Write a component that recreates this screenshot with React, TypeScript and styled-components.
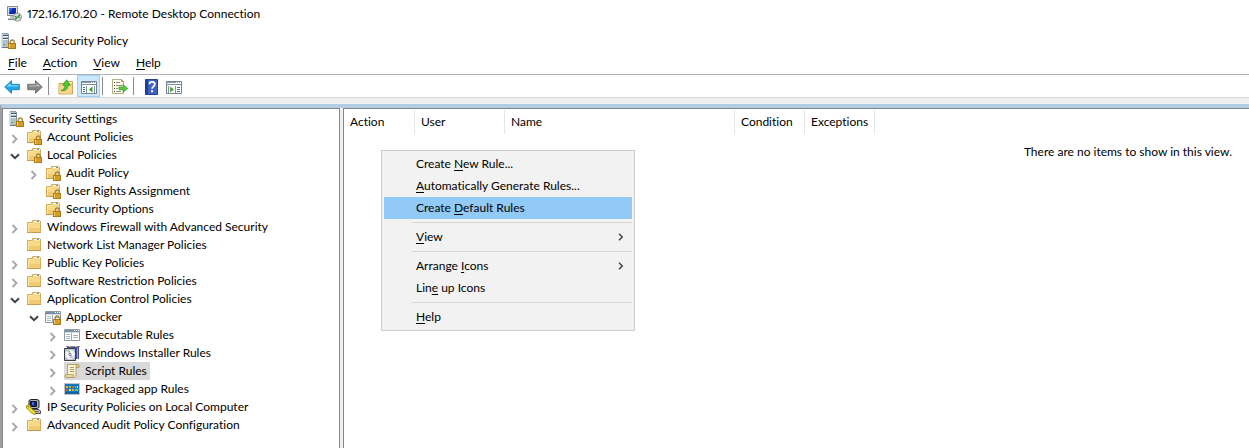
import React from "react";
import styled, { createGlobalStyle } from "styled-components";

const GlobalStyle = createGlobalStyle`
  *, *::before, *::after { box-sizing: border-box; }
  body {
    margin: 0;
    background: #ffffff;
    color: #000000;
    font-family: "Segoe UI", Lato, "Open Sans", sans-serif;
    font-size: 12px;
    line-height: 18px;
    font-variant-ligatures: none;
    font-variant-numeric: proportional-nums;
  }
  button {
    margin: 0;
    padding: 0;
    border: 0;
    background: none;
    color: inherit;
    font: inherit;
    font-variant-ligatures: none;
    text-align: left;
    white-space: nowrap;
  }
  h1, h2, ul, p { margin: 0; padding: 0; font-size: inherit; font-weight: inherit; list-style: none; }
  svg { display: block; flex: none; }
`;

/* ---------- layout ---------- */

const Window = styled.div`
  display: flex;
  flex-direction: column;
  min-height: 100vh;
`;

const RemoteTitle = styled.header`
  display: flex;
  align-items: center;
  gap: 5px;
  height: 28px;
  padding-left: 6px;
`;

const ConsoleTitle = styled.div`
  display: flex;
  align-items: center;
  gap: 5px;
  height: 26px;
`;

const MenuBar = styled.nav`
  display: flex;
  align-items: center;
  gap: 16px;
  height: 21px;
  padding: 0 8px 2px;
  border-bottom: 1px solid #b4b4b4;
`;

const MenuBarItem = styled.button`
  line-height: 18px;
`;

const Key = styled.u`
  text-underline-offset: 2px;
  text-decoration-skip-ink: none;
`;

const ToolBar = styled.div`
  display: flex;
  align-items: center;
  height: 23px;
  border-bottom: 1px solid #d9d9d9;
`;

const ToolButton = styled.button<{ $active?: boolean }>`
  display: flex;
  align-items: center;
  justify-content: center;
  width: 23px;
  height: 22px;
  padding-top: 2px;
  border: 1px solid ${(p) => (p.$active ? "#99d1ff" : "transparent")};
  background: ${(p) => (p.$active ? "#cce8ff" : "transparent")};
`;

const ToolDivider = styled.span`
  width: 1px;
  height: 18px;
  margin: 0 5px 0 2px;
  background: #8c8c8c;
`;

const Workspace = styled.div`
  display: flex;
  flex-direction: column;
  flex: 1;
  padding-top: 6px;
  background: #f0f0f0;
`;

const PaneFrame = styled.main`
  display: grid;
  grid-template-columns: 338px minmax(0, 1fr);
  column-gap: 3px;
  flex: 1;
  border-left: 2px solid #a0a0a0;
  border-top: 4px solid #b4cde6;
  background: #f0f0f0;
`;

const TreePane = styled.nav`
  padding: 1px 0 14px 5px;
  border: 1px solid #828790;
  border-bottom: 0;
  background: #ffffff;
`;

const ListPane = styled.section`
  position: relative;
  padding-top: 1px;
  border: 1px solid #828790;
  border-width: 1px 0 0 1px;
  background: #ffffff;
`;

/* ---------- tree ---------- */

const TreeRow = styled.div<{ $depth: number }>`
  display: flex;
  align-items: center;
  height: 18px;
  padding-left: ${(p) => (p.$depth === 0 ? 0 : p.$depth * 19 - 19)}px;
`;

const Twisty = styled.span`
  display: flex;
  align-items: center;
  justify-content: center;
  width: 13px;
  height: 18px;
  padding-top: 3px;
  margin-right: 5px;
`;

const TreeButton = styled.button<{ $selected?: boolean }>`
  display: flex;
  align-items: center;
  height: 18px;
  gap: 5px;
  padding-right: 3px;
  background: ${(p) => (p.$selected ? "#d9d9d9" : "none")};
`;

/* ---------- list ---------- */

const RuleTable = styled.table`
  table-layout: fixed;
  width: 100%;
  border-collapse: separate;
  border-spacing: 0;
`;

const ColumnHead = styled.th<{ $width?: number }>`
  width: ${(p) => (p.$width ? p.$width + "px" : "auto")};
  height: 24px;
  padding: 0 0 0 6px;
  border-right: ${(p) => (p.$width ? "1px solid #e5e5e5" : "0")};
  font-weight: 400;
  text-align: left;
  white-space: nowrap;
`;

const EmptyCell = styled.td`
  padding: 9px 17px 0 0;
  text-align: right;
`;

/* ---------- context menu ---------- */

const ContextMenu = styled.div`
  position: absolute;
  top: 41px;
  left: 37px;
  width: 254px;
  padding: 2px;
  border: 1px solid #cccccc;
  background: #f2f2f2;
`;

const ContextItem = styled.button<{ $active?: boolean }>`
  display: flex;
  align-items: center;
  justify-content: space-between;
  width: 100%;
  height: 22px;
  padding: 0 8px 0 32px;
  background: ${(p) => (p.$active ? "#91c9f7" : "none")};
`;

const ContextDivider = styled.hr`
  height: 1px;
  margin: 3px 0 3px 28px;
  border: 0;
  background: #d7d7d7;
`;

/* ---------- icons ---------- */

const Icon = ({ children }: { children: React.ReactNode }) => (
  <svg width="16" height="16" viewBox="0 0 16 16" aria-hidden="true">
    {children}
  </svg>
);

const Lock = () => (
  <g>
    <path d="M10.3 11V9.2a2 2.2 0 0 1 4 0V11" fill="none" stroke="#a98a3c" strokeWidth="1.4" />
    <rect x="8.5" y="10.5" width="7" height="5" fill="#e2ab33" stroke="#b07a14" />
    <path d="M9 12h6M9 14h6" stroke="#c18a1e" strokeWidth=".8" />
    <path d="M9.5 11v4" stroke="#f7d980" strokeWidth=".8" />
  </g>
);

const FolderShape = () => (
  <g>
    <path d="M1 3.5h5.5v-2h7l1 1V14H1z" fill="#f3d27c" />
    <path d="M1.5 14V3.5h5v-2h7.2l.8.8V14" fill="none" stroke="#d6ac58" />
    <path d="M8 2.5h6" stroke="#ffffff" />
    <path d="M11 2.5h2" stroke="#4a94d6" />
    <path d="M2 4.5h5l1-1h6" stroke="#fbe6a6" fill="none" />
    <path d="M2 5h12v9H2z" fill="#f8d98a" />
    <path d="M2 9h12v5H2z" fill="#f1ca74" />
    <path d="M2.5 5v8" stroke="#fce6a8" />
    <path d="M1 13.5h14" stroke="#c59c4c" />
  </g>
);

const FolderIcon = () => <Icon><FolderShape /></Icon>;
const LockedFolderIcon = () => <Icon><FolderShape /><Lock /></Icon>;

const PolicyIcon = () => (
  <Icon>
    <path d="M2.5.5h6v14h-7V1.5z" fill="#a9bac6" />
    <path d="M2 1h6v13H2z" fill="#b0c1cc" />
    <path d="M2 .5h6" stroke="#8fa0ad" />
    <path d="M8.5 1v13" stroke="#8090a0" />
    <path d="M2.500 1v13" stroke="#c9d6de" />
    <path d="M3 2.5h5M3 5.5h5" stroke="#455866" />
    <path d="M3 3.5h5M3 6.5h5" stroke="#eef4f8" />
    <path d="M3 11.5h2" stroke="#55a84e" />
    <path d="M2 14.5h7" stroke="#687986" />
    <Lock />
  </Icon>
);

const WindowShape = () => (
  <g>
    <path d="M.5 2.5h15v11H.5z" fill="#ffffff" stroke="#8d98a2" />
    <path d="M1 3h14v2H1z" fill="#7890a4" />
    <path d="M10 3.5h1M12 3.5h1M14 3.5h1" stroke="#ffffff" />
    <path d="M1 5.5h14" stroke="#d0dbe3" />
    <path d="M2 7.5h4M2 9.5h4M2 11.5h4" stroke="#a3b6c5" />
    <path d="M7.5 6v8" stroke="#9aa7b1" />
    <path d="M9 8.5h5M9 10.5h5" stroke="#a9b1b8" />
  </g>
);

const RulesIcon = () => <Icon><WindowShape /></Icon>;
const AppLockerIcon = () => <Icon><WindowShape /><Lock /></Icon>;

const RemoteIcon = () => (
  <Icon>
    <path d="M1.5.5h10v9h-10z" fill="#e0e5e9" stroke="#838d98" />
    <path d="M3 2h7v6H3z" fill="#102bb0" />
    <path d="M3 2h4L3 7z" fill="#3669dc" />
    <path d="M4 10h5v2H4zM2 12h8v2H2z" fill="#bec5cb" />
    <path d="M2 13.5h8" stroke="#77818a" />
    <circle cx="11.5" cy="11.2" r="4" fill="#d9dfd8" stroke="#909990" />
    <path d="M9 10.2l2 1.6-2 1.7M14 8.8l-2 1.7 2 1.6" fill="none" stroke="#288a35" strokeWidth="1.2" />
  </Icon>
);

const InstallerIcon = () => (
  <Icon>
    <path d="M3 1h12v13h-3V4H3z" fill="#4650a0" />
    <path d="M2 1.5h14" stroke="#7c82b8" />
    <path d="M13.5 3v11" stroke="#9aa0d4" />
    <path d="M5 1.5h2M11 1.5h2" stroke="#d8c545" />
    <path d="M.5 3.5h11v12H.5z" fill="#b9c0c5" stroke="#3a3f45" />
    <circle cx="6" cy="9.5" r="4.6" fill="#f9fafb" stroke="#dfe4e7" />
    <path d="M6 9L3 6a4 4 0 0 1 3-1z" fill="#99d29c" />
    <path d="M6 9l3.5 3a4 4 0 0 1-3.5 1z" fill="#c6b8e8" />
    <circle cx="6" cy="9.5" r="1.4" fill="#60686d" />
    <circle cx="6" cy="9.5" r=".7" fill="#ffffff" />
  </Icon>
);

const ScriptIcon = () => (
  <Icon>
    <path d="M3.5 1.500h10a1.500 1.500 0 0 1 0 3H12v8.800a1.700 1.700 0 0 1-1.500 1.200h-8a1.500 1.500 0 0 1 0-3h1z" fill="#fff3c8" stroke="#b3a26d" />
    <path d="M12 4.5V3a1.5 1.5 0 0 1 3 0v1.5z" fill="#dfcc91" stroke="#a89560" strokeWidth=".8" />
    <path d="M1.5 13a1.3 1.3 0 0 1 1-1.5h7v3h-7A1.5 1.5 0 0 1 1.5 13z" fill="#ead9a2" stroke="#a89560" strokeWidth=".8" />
    <path d="M6 4.5h4M6 6.5h4M6 8.5h4" stroke="#9b9988" />
  </Icon>
);

const PackageIcon = () => (
  <Icon>
    <path d="M.5 2.5h15v11H.5z" fill="#1878b7" stroke="#bec5ca" />
    <path d="M1 11h14v2H1z" fill="#16649c" />
    <path d="M2 5h2v2H2zM8 8h2v2H8z" fill="#f0ac27" />
    <path d="M5 5h2v2H5zM11 5h1v2h-1z" fill="#6ed84c" />
    <path d="M8 5h2v2H8zM2 8h2v2H2z" fill="#e75430" />
    <path d="M5 8h2v2H5zM13 5h1v2h-1z" fill="#f5db50" />
    <path d="M11 8h3v2h-3z" fill="#63d84c" />
  </Icon>
);

const IpSecIcon = () => (
  <Icon>
    <path d="M3 1.5L5 .5h6l2 1v7l-2 1H5l-2-1z" fill="#aeb1bd" stroke="#23232c" />
    <path d="M4.5 2.5h6v5h-6z" fill="#0b1998" stroke="#14141c" />
    <path d="M6 3h2v3H6z" fill="#356fe4" />
    <path d="M6 10.5h7l1.5 1.5v2.5H8z" fill="#c2c3cc" stroke="#292933" strokeWidth=".8" />
    <path d="M9 12.5h4" stroke="#62636c" />
    <path d="M.6 6.6l2-1.2L4.6 7v1.6l5.2 4.7-.6 2-1.8-.2-1-1.2-1.2-.2-2.8-3.4-1.8-1z" fill="#f6e319" stroke="#807000" strokeWidth=".8" />
    <path d="M2 7.8h1.2" stroke="#4f4600" />
  </Icon>
);

const ArrowIcon = ({ direction }: { direction: "back" | "forward" }) => {
  const back = direction === "back";
  return (
    <Icon>
      <g transform={back ? undefined : "matrix(-1 0 0 1 16 0)"}>
        <path d="M.7 8L7.5 1.7v3.6h7.8v5.4H7.5v3.6z" fill={back ? "#21a5e8" : "#858585"} stroke={back ? "#2686c2" : "#747474"} />
        <path d="M2.5 7.5l4-3.7v2.5h7.8v1.2z" fill={back ? "#79d6fa" : "#b3b3b3"} />
      </g>
    </Icon>
  );
};

const UpFolderIcon = () => (
  <Icon>
    <path d="M1 4.5h6v-2h7.5V15H1z" fill="#f3d27c" stroke="#cfa55a" />
    <path d="M1.5 6H14v8.5H1.5z" fill="#f7d88a" />
    <path d="M9 3.5h5" stroke="#fdf3cf" />
    <path d="M3 11.5c2.500-.3 4-2.500 4.200-5.200H4.800L8.700.8l3.700 5.500H10c-.2 4-2.800 6-7 5.200z" fill="#4dcc36" stroke="#27901e" strokeWidth=".7" />
  </Icon>
);

const PaneIcon = ({ direction }: { direction: "left" | "right" }) => (
  <Icon>
    <path d="M.5 2.5h15v12H.5z" fill="#ffffff" stroke="#748490" />
    <path d="M1 3.5h14" stroke="#8798a6" />
    <path d="M10 3.5h1M12 3.5h1M14 3.5h1" stroke="#ffffff" />
    <path d="M1 5.5h14" stroke="#7d8c98" />
    {direction === "left" ? (
      <g>
        <path d="M5.5 7v7M13.5 7v7" stroke="#8492a0" />
        <path d="M2 8.5h2M2 10.5h2M2 12.5h2" stroke="#3576b0" />
        <path d="M11.5 7.5v6l-3.700-3z" fill="#36a52c" />
      </g>
    ) : (
      <g>
        <path d="M2.5 7v7M9.5 7v7" stroke="#8492a0" />
        <path d="M11 8.5h3M11 10.5h3M11 12.5h3" stroke="#3576b0" />
        <path d="M4.200 7.5v6l3.700-3z" fill="#36a52c" />
      </g>
    )}
  </Icon>
);

const ExportIcon = () => (
  <Icon>
    <path d="M.5.5h9l2 2v12H.5z" fill="#fff9df" stroke="#b3ad8a" />
    <path d="M9.5.5v2h2" fill="none" stroke="#9d9879" />
    <path d="M2 3.5h1M2 6.5h1M2 9.5h1M2 12.5h1" stroke="#474747" />
    <path d="M4 3.5h4M4 6.5h6M4 9.5h2M4 12.5h5" stroke="#8c8ca0" />
    <path d="M7 8h4V5.400l4.700 4L11 13.400v-2.700H7z" fill="#55ca3e" stroke="#379929" strokeWidth=".7" />
  </Icon>
);

const HelpIcon = () => (
  <Icon>
    <path d="M2.5.5h12v15h-12z" fill="#3f60c4" stroke="#24418f" />
    <path d="M3 1h2v14H3z" fill="#213f99" />
    <path d="M6.6 5.3V4.2C6.8 2.5 11.8 2.2 11.8 5.2c0 2-2.700 2.300-2.700 4.600" fill="none" stroke="#ffffff" strokeWidth="1.8" />
    <path d="M8.1 11.2h2v2h-2z" fill="#ffffff" />
  </Icon>
);

const TwistyIcon = ({ open }: { open: boolean }) => (
  <svg width="10" height="10" viewBox="0 0 10 10" aria-hidden="true">
    <path
      d={open ? "M1 2.2l4 4 4-4" : "M2.5 1l4 4-4 4"}
      fill="none"
      stroke={open ? "#404040" : "#a6a6a6"}
      strokeWidth={open ? 2 : 1.8}
    />
  </svg>
);

const SubmenuIcon = () => (
  <svg width="6" height="8" viewBox="0 0 6 8" aria-hidden="true">
    <path d="M1 .7L4.3 4 1 7.3" fill="none" stroke="#404040" strokeWidth="1.4" />
  </svg>
);

/* ---------- data ---------- */

type TreeNode = {
  label: string;
  icon: React.ComponentType;
  open?: boolean;
  selected?: boolean;
  children?: TreeNode[];
};

const tree: TreeNode = {
  label: "Security Settings",
  icon: PolicyIcon,
  children: [
    { label: "Account Policies", icon: LockedFolderIcon, open: false },
    {
      label: "Local Policies",
      icon: LockedFolderIcon,
      open: true,
      children: [
        { label: "Audit Policy", icon: LockedFolderIcon, open: false },
        { label: "User Rights Assignment", icon: LockedFolderIcon },
        { label: "Security Options", icon: LockedFolderIcon },
      ],
    },
    { label: "Windows Firewall with Advanced Security", icon: FolderIcon, open: false },
    { label: "Network List Manager Policies", icon: FolderIcon },
    { label: "Public Key Policies", icon: FolderIcon, open: false },
    { label: "Software Restriction Policies", icon: FolderIcon, open: false },
    {
      label: "Application Control Policies",
      icon: FolderIcon,
      open: true,
      children: [
        {
          label: "AppLocker",
          icon: AppLockerIcon,
          open: true,
          children: [
            { label: "Executable Rules", icon: RulesIcon, open: false },
            { label: "Windows Installer Rules", icon: InstallerIcon, open: false },
            { label: "Script Rules", icon: ScriptIcon, open: false, selected: true },
            { label: "Packaged app Rules", icon: PackageIcon, open: false },
          ],
        },
      ],
    },
    { label: "IP Security Policies on Local Computer", icon: IpSecIcon, open: false },
    { label: "Advanced Audit Policy Configuration", icon: FolderIcon, open: false },
  ],
};

const columns = [
  { label: "Action", width: 71 },
  { label: "User", width: 90 },
  { label: "Name", width: 230 },
  { label: "Condition", width: 70 },
  { label: "Exceptions", width: 70 },
];

const TreeItem = ({ node, depth }: { node: TreeNode; depth: number }) => {
  const NodeIcon = node.icon;
  return (
    <li role="treeitem" aria-expanded={node.open} aria-selected={!!node.selected}>
      <TreeRow $depth={depth}>
        {depth > 0 && (
          <Twisty>{node.open !== undefined && <TwistyIcon open={node.open} />}</Twisty>
        )}
        <TreeButton type="button" $selected={node.selected}>
          <NodeIcon />
          {node.label}
        </TreeButton>
      </TreeRow>
      {node.children && (
        <ul role="group">
          {node.children.map((child) => (
            <TreeItem key={child.label} node={child} depth={depth + 1} />
          ))}
        </ul>
      )}
    </li>
  );
};

/* Label whose access key is underlined. */
const Mnemonic = ({ text, at = 0 }: { text: string; at?: number }) => (
  <span>
    {text.slice(0, at)}
    <Key>{text[at]}</Key>
    {text.slice(at + 1)}
  </span>
);

export default function App() {
  return (
    <Window>
      <GlobalStyle />
      <RemoteTitle>
        <RemoteIcon />
        <h1>172.16.170.20 - Remote Desktop Connection</h1>
      </RemoteTitle>
      <ConsoleTitle>
        <PolicyIcon />
        <h2>Local Security Policy</h2>
      </ConsoleTitle>
      <MenuBar aria-label="Menu bar">
        {["File", "Action", "View", "Help"].map((label) => (
          <MenuBarItem key={label} type="button"><Mnemonic text={label} /></MenuBarItem>
        ))}
      </MenuBar>
      <ToolBar role="toolbar">
        <ToolButton type="button" aria-label="Back"><ArrowIcon direction="back" /></ToolButton>
        <ToolButton type="button" aria-label="Forward"><ArrowIcon direction="forward" /></ToolButton>
        <ToolDivider />
        <ToolButton type="button" aria-label="Up one level"><UpFolderIcon /></ToolButton>
        <ToolButton type="button" aria-label="Show or hide console tree" $active><PaneIcon direction="left" /></ToolButton>
        <ToolDivider />
        <ToolButton type="button" aria-label="Export list"><ExportIcon /></ToolButton>
        <ToolDivider />
        <ToolButton type="button" aria-label="Help"><HelpIcon /></ToolButton>
        <ToolButton type="button" aria-label="Show or hide action pane"><PaneIcon direction="right" /></ToolButton>
      </ToolBar>
      <Workspace>
        <PaneFrame>
          <TreePane aria-label="Console tree">
            <ul role="tree"><TreeItem node={tree} depth={0} /></ul>
          </TreePane>
          <ListPane>
            <RuleTable>
              <thead>
                <tr>
                  {columns.map((c) => (
                    <ColumnHead key={c.label} $width={c.width}>{c.label}</ColumnHead>
                  ))}
                  <ColumnHead as="td" />
                </tr>
              </thead>
              <tbody>
                <tr><EmptyCell colSpan={6}>There are no items to show in this view.</EmptyCell></tr>
              </tbody>
            </RuleTable>
            <ContextMenu role="menu">
              <ContextItem type="button" role="menuitem"><Mnemonic text="Create New Rule..." at={7} /></ContextItem>
              <ContextItem type="button" role="menuitem"><Mnemonic text="Automatically Generate Rules..." /></ContextItem>
              <ContextItem type="button" role="menuitem" $active><Mnemonic text="Create Default Rules" at={7} /></ContextItem>
              <ContextDivider />
              <ContextItem type="button" role="menuitem"><Mnemonic text="View" /><SubmenuIcon /></ContextItem>
              <ContextDivider />
              <ContextItem type="button" role="menuitem"><Mnemonic text="Arrange Icons" at={8} /><SubmenuIcon /></ContextItem>
              <ContextItem type="button" role="menuitem"><Mnemonic text="Line up Icons" at={3} /></ContextItem>
              <ContextDivider />
              <ContextItem type="button" role="menuitem"><Mnemonic text="Help" /></ContextItem>
            </ContextMenu>
          </ListPane>
        </PaneFrame>
      </Workspace>
    </Window>
  );
}
